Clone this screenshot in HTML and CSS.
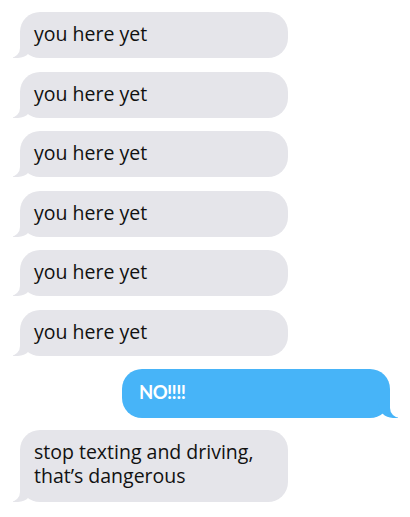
FILE: index.html
```html
<!DOCTYPE html>
<html lang="en">
<head>
    <meta charset="UTF-8">
    <meta name="viewport" content="width=device-width, initial-scale=1.0">
    <title>Messages</title>
    <link rel="stylesheet" href="styles.css">
</head>
<body>
    <div class="chat">
        <div class="bubble received">you here yet</div>
        <div class="bubble received">you here yet</div>
        <div class="bubble received">you here yet</div>
        <div class="bubble received">you here yet</div>
        <div class="bubble received">you here yet</div>
        <div class="bubble received">you here yet</div>
        <div class="bubble sent">NO!!!!</div>
        <div class="bubble received">stop texting and driving,<br>that’s dangerous</div>
    </div>
</body>
</html>
```

FILE: styles.css
```css
* {
    margin: 0;
    padding: 0;
    box-sizing: border-box;
}
body {
    background: #fff;
    font-family: "Open Sans", "DejaVu Sans", sans-serif;
}
.chat {
    display: flex;
    flex-direction: column;
    gap: 13.6px;
    padding-top: 12px;
}
.bubble {
    position: relative;
    width: 268px;
    padding: 10px 14px 12px;
    border-radius: 20px;
    font-size: 19.5px;
    line-height: 24px;
}
.received {
    margin-left: 20px;
    background: #e5e5ea;
    color: #111;
}
.received:last-child {
    padding-bottom: 14px;
}
.sent {
    margin: -1px 0 -1px 122px;
    padding: 11px 17px 14px;
    background: #47b4f8;
    color: #fff;
    font-family: "Lato", "Open Sans", sans-serif;
    font-weight: 700;
    font-size: 18.5px;
    letter-spacing: -0.6px;
}
/* tails */
.bubble::before,
.bubble::after {
    content: "";
    position: absolute;
    bottom: 0;
    height: 20px;
}
.received::before {
    left: -7px;
    width: 20px;
    background: #e5e5ea;
    border-bottom-right-radius: 15px;
}
.received::after {
    left: -10px;
    width: 10px;
    background: #fff;
    border-bottom-right-radius: 10px;
}
.sent::before {
    right: -8px;
    width: 20px;
    background: #47b4f8;
    border-bottom-left-radius: 15px;
}
.sent::after {
    right: -10px;
    width: 10px;
    background: #fff;
    border-bottom-left-radius: 10px;
}
```
